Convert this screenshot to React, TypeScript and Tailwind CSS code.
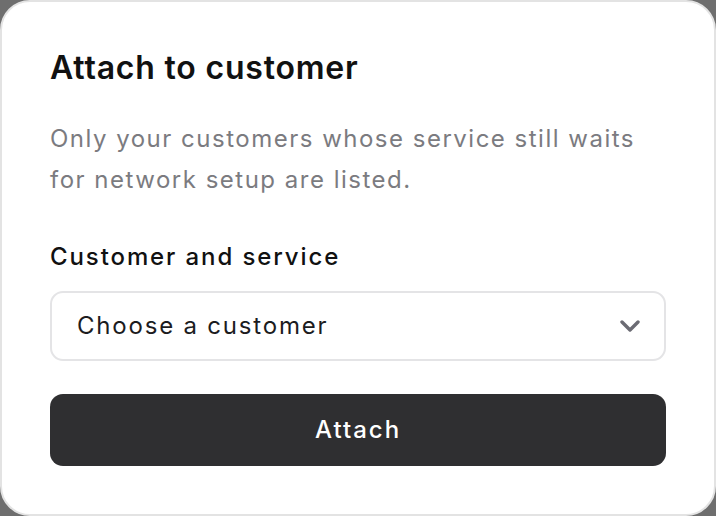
import { useState } from "react";

export default function App() {
  const [customer, setCustomer] = useState("");

  return (
    <div className="w-[716px] h-[516px] bg-[#6e6e6e] font-['Inter',sans-serif]">
      <div className="w-full h-full bg-white border-2 border-[#e3e3e3] rounded-[30px] px-[48px] pt-[46px] flex flex-col">
        <h1 className="text-[32px] leading-[40px] font-semibold text-[#111111] tracking-[0.8px]">
          Attach to customer
        </h1>
        <p className="mt-[30px] text-[24px] leading-[41px] text-[#7b7b80] tracking-[1.5px]">
          Only your customers whose service still waits for network setup are listed.
        </p>

        <label className="mt-[41px] text-[24px] leading-[32px] font-medium text-[#111111] tracking-[1.9px]">
          Customer and service
        </label>
        <div className="mt-[18px] relative h-[70px] rounded-[13px] border-2 border-[#e4e4e6] flex items-center pl-[25px] pr-[24px]">
          <span className="flex-1 text-[24px] text-[#1c1c1e] tracking-[1.8px]">
            {customer || "Choose a customer"}
          </span>
          <svg width="20" height="12" viewBox="0 0 20 12" fill="none" className="text-[#6b6b73]">
            <polyline
              points="2,2 10,10 18,2"
              stroke="currentColor"
              strokeWidth="3.4"
              strokeLinecap="round"
              strokeLinejoin="round"
            />
          </svg>
        </div>

        <button
          onClick={() => setCustomer(customer)}
          className="mt-[33px] h-[72px] rounded-[13px] bg-[#2f2f31] text-white text-[24px] font-medium tracking-[2px]"
        >
          Attach
        </button>
      </div>
    </div>
  );
}
